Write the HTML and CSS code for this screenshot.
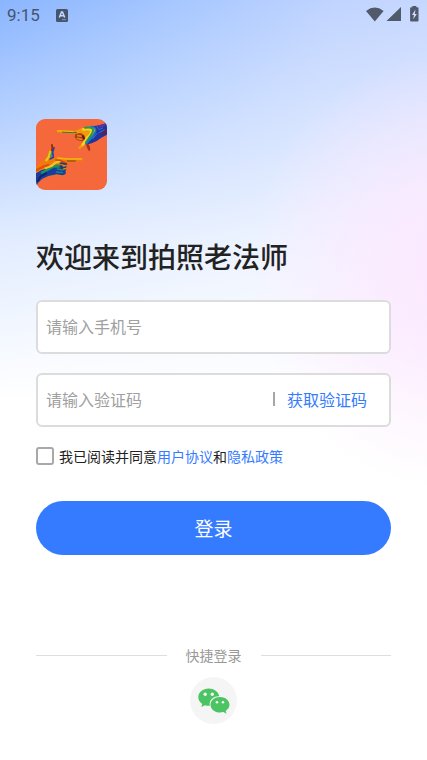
FILE: index.html
```html
<!DOCTYPE html>
<html lang="zh-CN">
<head>
<meta charset="utf-8">
<meta name="viewport" content="width=device-width, initial-scale=1">
<title>登录</title>
<link rel="stylesheet" href="styles.css">
</head>
<body>
<header class="status">
  <span class="time">9:15</span>
  <svg class="app-icon" width="12" height="13" viewBox="0 0 12 13" aria-hidden="true"><rect width="12" height="13" rx="1.5" fill="#46546d"/><path d="M3.3 8.5 5.5 3h1l2.2 5.5M4.3 6.8h3.4" fill="none" stroke="#c3d9ff" stroke-width="1.5"/><path d="M6.5 10.7h1M8.5 10.7h1" stroke="#c3d9ff"/></svg>
  <svg class="system" width="54" height="18" viewBox="0 0 54 18" aria-hidden="true">
    <g fill="#505a6b"><path d="M0 5Q8.800-1.800 17.600 5L8.800 15.500Z"/><path d="M35 1v14H20.500Z"/><path d="M46.300 1.200V0h4v1.200h1.200q1 0 1 1V14.500q0 1-1 1h-6.400q-1 0-1-1V2.200q0-1 1-1Z"/></g>
    <path d="M49.500 3.500 46 9h2l-.8 4.300L50.800 8h-2Z" fill="#d3dfff"/>
  </svg>
</header>
<main class="page">
  <svg class="logo" viewBox="18 21 213 213" role="img" aria-label="拍照老法师">
    <rect x="18" y="21" width="213" height="213" fill="#f4683c"/>
    <g stroke-linejoin="round" stroke-linecap="round">
      <!-- upper hand -->
      <path d="M188 43 208 40 231 32V68L214 77 200 87 185 94 168 98 162 88 178 66Z" fill="#20349c"/>
      <path d="M80 55 95 54 137 56 156 48 190 44 197 55 188 70 172 86 160 103 149 112 144 108 158 92 164 78 157 62 140 65 82 61Z" fill="#f29a0c"/>
      <path d="M136 67 150 63 163 70 166 82 157 88 141 84 134 76Z" fill="#a83b15"/>
      <path d="M143 71 158 73M142 79 155 82" fill="none" stroke="#e8820e" stroke-width="5"/>
      <path d="M158 72 163 80" fill="none" stroke="#6a1720" stroke-width="6"/>
      <path d="M168 98 174 94 179 103 181 114 177 118 172 109Z" fill="#a53218"/>
      <path d="M160 52Q182 48 184 56T172 77L158 98" fill="none" stroke="#f7d51a" stroke-width="8"/>
      <path d="M165 47Q188 45 189 53T180 74L168 91" fill="none" stroke="#219b50" stroke-width="6"/>
      <path d="M184 43Q201 47 196 60T177 86L169 95" fill="none" stroke="#1479c8" stroke-width="5"/>
      <path d="M201 44 207 53 218 48M201 64 188 81M207 62 223 54" fill="none" stroke="#3270cf" stroke-width="3"/>
      <path d="M205 41 213 44 229 35" fill="none" stroke="#6032ad" stroke-width="5"/>
      <path d="M216 61 229 51V64L217 71Z" fill="#671b55"/>
      <path d="M98 60 139 62" fill="none" stroke="#3f7a31" stroke-width="4"/>
      <path d="M82 56 130 59" fill="none" stroke="#f5b511" stroke-width="3"/>
      <!-- lower hand -->
      <path d="M18 165 31 151 47 139 55 121 64 98 70 96 75 107 71 123 76 137 93 135 110 138 157 138 160 143 157 148 112 152 110 179 107 187 98 191 80 188 54 193 36 202 24 213 18 224Z" fill="#ef7b0d"/>
      <path d="M66 99 67 110 63 120" fill="none" stroke="#9e281b" stroke-width="6"/>
      <path d="M72 107 68 120 70 136 60 141" fill="none" stroke="#273cad" stroke-width="5"/>
      <path d="M61 119 57 134 49 145" fill="none" stroke="#e6c51d" stroke-width="7"/>
      <path d="M65 121 62 135" fill="none" stroke="#249b69" stroke-width="4"/>
      <path d="M18 184 35 174 55 169 76 158 91 158 107 166 107 186 98 190 80 187 55 192 36 201 24 213 18 224Z" fill="#183c9f"/>
      <path d="M36 182 53 173 70 163 89 163" fill="none" stroke="#159466" stroke-width="8"/>
      <path d="M47 168 66 161 77 151 90 149" fill="none" stroke="#f5c41b" stroke-width="7"/>
      <path d="M20 174 39 164 55 159" fill="none" stroke="#e44c11" stroke-width="7"/>
      <path d="M77 144 91 145 107 152M94 149 110 155" fill="none" stroke="#d14814" stroke-width="4"/>
      <path d="M91 153 109 157 106 167 91 163M90 170 107 171" fill="none" stroke="#24386f" stroke-width="5"/>
      <path d="M82 171 98 174M79 180 98 182" fill="none" stroke="#168a78" stroke-width="4"/>
      <path d="M100 162 109 160M101 171 108 169" fill="none" stroke="#d9891b" stroke-width="4"/>
      <path d="M23 207 32 193 48 184" fill="none" stroke="#15226d" stroke-width="6"/>
      <path d="M83 138 109 141 155 141" fill="none" stroke="#f5b516" stroke-width="4"/>
      <path d="M112 147 136 147" fill="none" stroke="#9b581a" stroke-width="4"/>
    </g>
  </svg>
  <h1>欢迎来到拍照老法师</h1>
  <form>
    <div class="field"><input type="tel" aria-label="手机号" placeholder="请输入手机号"></div>
    <div class="field"><input type="text" inputmode="numeric" aria-label="验证码" placeholder="请输入验证码"><button type="button" class="code">获取验证码</button></div>
    <div class="agree"><input type="checkbox" id="agree"><label for="agree">我已阅读并同意<a href="#terms">用户协议</a>和<a href="#privacy">隐私政策</a></label></div>
    <button type="submit" class="login">登录</button>
  </form>
  <section class="quick">
    <h2>快捷登录</h2>
    <button type="button" class="wechat" aria-label="微信登录">
      <svg width="32" height="26" viewBox="0 0 32 26" aria-hidden="true">
        <path d="M10.800.500C4.900.500.300 4.400.300 9.200c0 2.800 1.500 5.100 4 6.700l-1 3.200 3.700-1.900c1.300.4 2.500.6 3.900.6h1C10.500 12.600 15 7.900 21.300 8.200 20.300 3.700 16 .500 10.800.500Z" fill="#4cc463"/>
        <path d="M22 9c-5.400 0-9.500 3.400-9.500 7.800s4.200 7.800 9.500 7.800c1.100 0 2.300-.2 3.400-.5l3.200 1.700-.9-2.900c2.300-1.500 3.800-3.600 3.800-6.100C31.500 12.400 27.300 9 22 9Z" fill="#4cc463"/>
        <g fill="#f5f5f5"><circle cx="7.200" cy="6.300" r="1.700"/><circle cx="14.300" cy="6.300" r="1.700"/><circle cx="19" cy="14.300" r="1.300"/><circle cx="25" cy="14.300" r="1.300"/></g>
      </svg>
    </button>
  </section>
</main>
</body>
</html>
```
FILE: styles.css
```css
* { box-sizing: border-box; }

body {
  margin: 0;
  min-height: 100vh;
  color: #222;
  font-family: "Noto Sans CJK SC", sans-serif;
  font-size: 14px;
  background:
    radial-gradient(ellipse 200px 220px at 106% 270px, #fce9ff 0%, #fce9ffcc 35%, #fce9ff00 100%),
    linear-gradient(180deg, #fff0 0, #ffffff66 130px, #ffffffbb 240px, #fff 400px),
    linear-gradient(100deg, #8ab5ff 0%, #a5c6ff 30%, #c0d4ff 60%, #d0dcff 100%);
  background-color: #fff;
}

button, input { font: inherit; }
button { border: 0; padding: 0; cursor: pointer; }
a { color: #347bff; text-decoration: none; }

.status {
  display: flex;
  align-items: center;
  height: 30px;
  padding: 0 7px;
}
.time {
  color: #46546d;
  font: 400 17px/30px Roboto, sans-serif;
}
.app-icon { margin-left: 16px; }
.system { margin-left: auto; }

.page { padding: 89px 36px 36px; }

.logo {
  display: block;
  width: 71px;
  height: 71px;
  border-radius: 9px;
}

h1 {
  margin: 45px 0 23px;
  font-size: 28px;
  line-height: 42px;
  font-weight: 500;
}

form { display: grid; }

.field {
  display: flex;
  align-items: center;
  height: 54px;
  margin-bottom: 19px;
  padding: 0 22px 2px 8px;
  background: #fff;
  border: 2px solid #dcdcdc;
  border-radius: 6px;
}
.field input {
  flex: 1;
  min-width: 0;
  height: 48px;
  padding: 0;
  border: 0;
  outline: 0;
  background: none;
  font-size: 16px;
}
.field input::placeholder { color: #a0a0a0; opacity: 1; }
.code {
  display: flex;
  align-items: center;
  gap: 12px;
  background: none;
  color: #347bff;
  font-size: 16px;
}
.code::before {
  content: "";
  width: 2px;
  height: 14px;
  background: #a6a6a6;
}

.agree {
  display: flex;
  align-items: center;
  gap: 5px;
  height: 20px;
  line-height: 20px;
}
.agree input {
  appearance: none;
  width: 18px;
  height: 18px;
  margin: 0;
  border: 2px solid #a8a8a8;
  border-radius: 3px;
}
.agree input:checked { background: #347bff; border-color: #347bff; }

.login {
  height: 54px;
  margin-top: 35px;
  padding-bottom: 2px;
  border-radius: 27px;
  background: #347bff;
  color: #fff;
  font-size: 19px;
}

.quick {
  display: grid;
  justify-items: center;
  gap: 12px;
  margin-top: 90px;
}
.quick h2 {
  display: flex;
  align-items: center;
  gap: 19px;
  width: 100%;
  margin: 0;
  color: #999;
  font-size: 14px;
  line-height: 20px;
  font-weight: 400;
}
.quick h2::before, .quick h2::after {
  content: "";
  flex: 1;
  height: 1px;
  background: #dedede;
}
.wechat {
  display: grid;
  place-items: center;
  width: 47px;
  height: 47px;
  border-radius: 50%;
  background: #f5f5f5;
}
```
